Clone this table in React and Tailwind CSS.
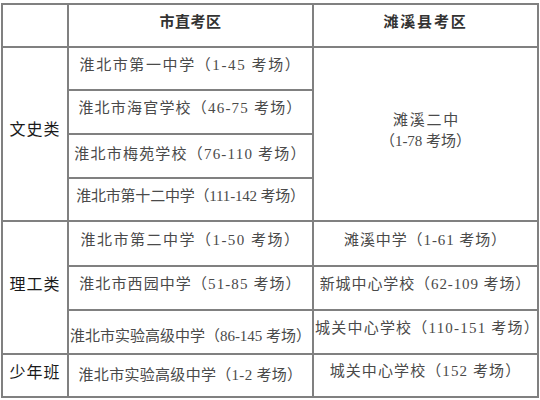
import React from "react";

const F = "font-['Liberation_Serif','Noto_Sans_CJK_SC',serif]";

function C({ className = "", children }) {
  return (
    <div className={`bg-white flex items-center justify-center whitespace-nowrap leading-none ${className}`}>
      {children}
    </div>
  );
}

export default function App() {
  return (
    <div className={`w-[540px] h-[400px] bg-white pt-[3px] pl-[1px] ${F}`}>
      <div className="grid grid-cols-[64px_243px_223px] grid-rows-[41px_41px_42px_42px_41px_43px_42px_42px_41px] gap-[2px] p-[2px] bg-[#808080] w-[538px] text-[15px] text-[#4a4a4a]">
        {/* header */}
        <C className="col-start-1 row-start-1" />
        <C className="col-start-2 row-start-1 pb-[7px] font-bold text-[#333] tracking-[0.5px]">市直考区</C>
        <C className="col-start-3 row-start-1 pb-[7px] font-bold text-[#333] tracking-[1.8px]">滩溪县考区</C>

        {/* 文史类 */}
        <C className="col-start-1 row-start-2 row-span-4 pb-[9px] text-[16px] text-[#1a1a1a] tracking-[1px]">文史类</C>
        <C className="col-start-2 row-start-2 pb-[7px] tracking-[1.6px]">淮北市第一中学（1-45 考场）</C>
        <C className="col-start-2 row-start-3 pb-[8px] tracking-[1.2px]">淮北市海官学校（46-75 考场）</C>
        <C className="col-start-2 row-start-4 pb-[4px] tracking-[1.2px]">淮北市梅苑学校（76-110 考场）</C>
        <C className="col-start-2 row-start-5 pb-[7px] tracking-[-0.2px]">淮北市第十二中学（111-142 考场）</C>
        <div className="col-start-3 row-start-2 row-span-4 bg-white flex flex-col items-center justify-center pb-[7px] leading-none whitespace-nowrap">
          <div className="tracking-[1.75px] pl-[2px]">滩溪二中</div>
          <div className="mt-[6px]">（1-78 考场）</div>
        </div>

        {/* 理工类 */}
        <C className="col-start-1 row-start-6 row-span-3 pb-[5px] text-[16px] text-[#1a1a1a] tracking-[1px]">理工类</C>
        <C className="col-start-2 row-start-6 pb-[6px] tracking-[1.5px]">淮北市第二中学（1-50 考场）</C>
        <C className="col-start-2 row-start-7 pb-[8px] tracking-[1.1px]">淮北市西园中学（51-85 考场）</C>
        <C className="col-start-2 row-start-8 pt-[8px] tracking-[0px]">淮北市实验高级中学（86-145 考场）</C>
        <C className="col-start-3 row-start-6 pb-[7px] tracking-[0.9px]">滩溪中学（1-61 考场）</C>
        <C className="col-start-3 row-start-7 pb-[8px] tracking-[0.9px]">新城中心学校（62-109 考场）</C>
        <C className="col-start-3 row-start-8 pb-[8px] tracking-[1.2px] pl-[4px]">城关中心学校（110-151 考场）</C>

        {/* 少年班 */}
        <C className="col-start-1 row-start-9 pb-[5px] text-[16px] text-[#1a1a1a] tracking-[1px]">少年班</C>
        <C className="col-start-2 row-start-9 pb-[1px] tracking-[0.3px]">淮北市实验高级中学（1-2 考场）</C>
        <C className="col-start-3 row-start-9 pb-[9px] tracking-[1.1px]">城关中心学校（152 考场）</C>
      </div>
    </div>
  );
}
